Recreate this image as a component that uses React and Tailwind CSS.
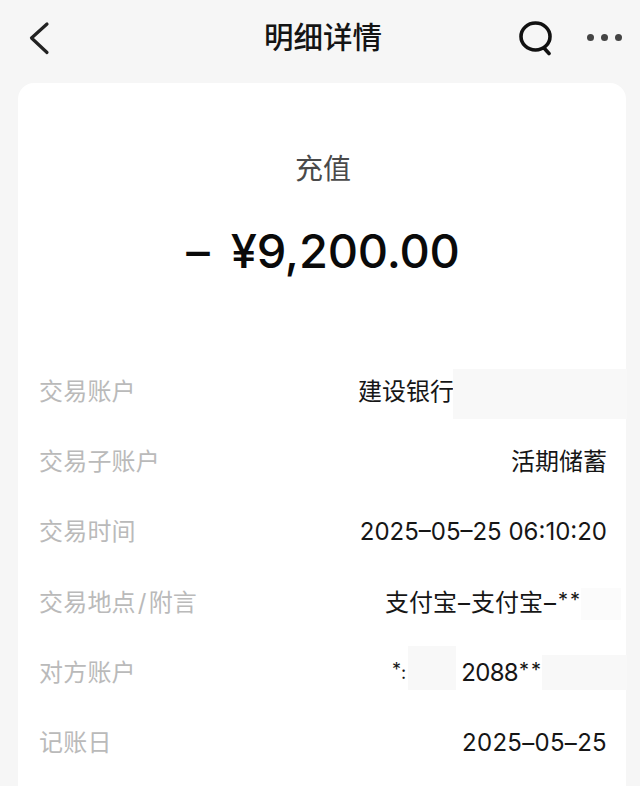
const cjk = { fontFamily: '"Inter","Noto Sans CJK SC",sans-serif' };

function Row({ label, children }) {
  return (
    <div className="flex h-[70.3px] items-center justify-between">
      <span className="text-[24px] leading-[32px] tracking-[0.2px] text-[#bababa]">{label}</span>
      <span className="flex items-center text-[24px] leading-[32px] text-[#161616]">{children}</span>
    </div>
  );
}

function Stars() {
  return <span className="mb-[6px] ml-[1px] text-[20px] leading-[24px] tracking-[2px]">**</span>;
}

function Dash() {
  return <span className="px-[1px]">–</span>;
}

export default function App() {
  return (
    <div style={cjk} className="relative h-[786px] w-[640px] overflow-hidden bg-[#f6f6f6]">
      <header className="relative flex h-[83px] items-center justify-between pb-[8px] pl-[26px] pr-[18px]">
        <svg width="26" height="34" viewBox="0 0 26 34" fill="none" stroke="#222" strokeWidth="3.2" strokeLinecap="round" strokeLinejoin="round">
          <path d="M21 3 L5.5 17 L21 31.5" />
        </svg>
        <h1 className="absolute left-[264px] top-[18px] text-[29.5px] font-medium leading-[38px] text-[#141414]">明细详情</h1>
        <div className="flex items-center gap-[33px]">
          <svg width="36" height="36" viewBox="0 0 36 36" fill="none" stroke="#111" strokeWidth="3.6" strokeLinecap="round">
            <ellipse cx="17.5" cy="16.5" rx="14.5" ry="13.5" />
            <path d="M26 28 L31 33.5" />
          </svg>
          <div className="flex items-center gap-[7px]">
            <span className="h-[7px] w-[7px] rounded-full bg-[#444]" />
            <span className="h-[7px] w-[7px] rounded-full bg-[#444]" />
            <span className="h-[7px] w-[7px] rounded-full bg-[#444]" />
          </div>
        </div>
      </header>

      <main className="mx-[18px] h-[720px] w-[608px] rounded-t-[16px] bg-white pl-[21px] pr-[19px]">
        <div className="pt-[67px] text-center text-[28px] leading-[38px] text-[#4a4a4a]">充值</div>
        <div className="mt-[33px] flex items-center justify-center text-[47px] font-medium leading-[60px] text-[#0a0a0a]">
          <span className="mr-[21px]">–</span>
          <span className="tracking-[-0.2px]">¥9,200.00</span>
        </div>
        <div className="mt-[75.5px]">
          <Row label="交易账户">
            建设银行
            <span className="w-[153px]" />
          </Row>
          <Row label="交易子账户">活期储蓄</Row>
          <Row label="交易时间">2025–05–25 06:10:20</Row>
          <Row label={<>交易地点<span className="px-[2px]">/</span>附言</>}>
            支付宝<Dash />支付宝<Dash /><Stars />
            <span className="w-[25px]" />
          </Row>
          <Row label="对方账户">
            <span className="mb-[6px] text-[18px] leading-[24px]">*</span>
            <span className="text-[18px] leading-[24px]">:</span>
            <span className="w-[55px]" />
            <span className="tracking-[-0.7px]">2088</span><Stars />
            <span className="w-[64px]" />
          </Row>
          <Row label="记账日">
            <span className="tracking-[0.3px]">2025–05–25</span>
          </Row>
        </div>
      </main>

      <div className="absolute left-[453px] top-[369px] h-[50px] w-[174px] bg-[#f8f8f8]" />
      <div className="absolute left-[581px] top-[588px] h-[32px] w-[40px] bg-[#fbfbfb]" />
      <div className="absolute left-[408px] top-[646px] h-[44px] w-[48px] bg-[#f8f8f8]" />
      <div className="absolute left-[542px] top-[655px] h-[35px] w-[85px] bg-[#f8f8f8]" />
    </div>
  );
}
